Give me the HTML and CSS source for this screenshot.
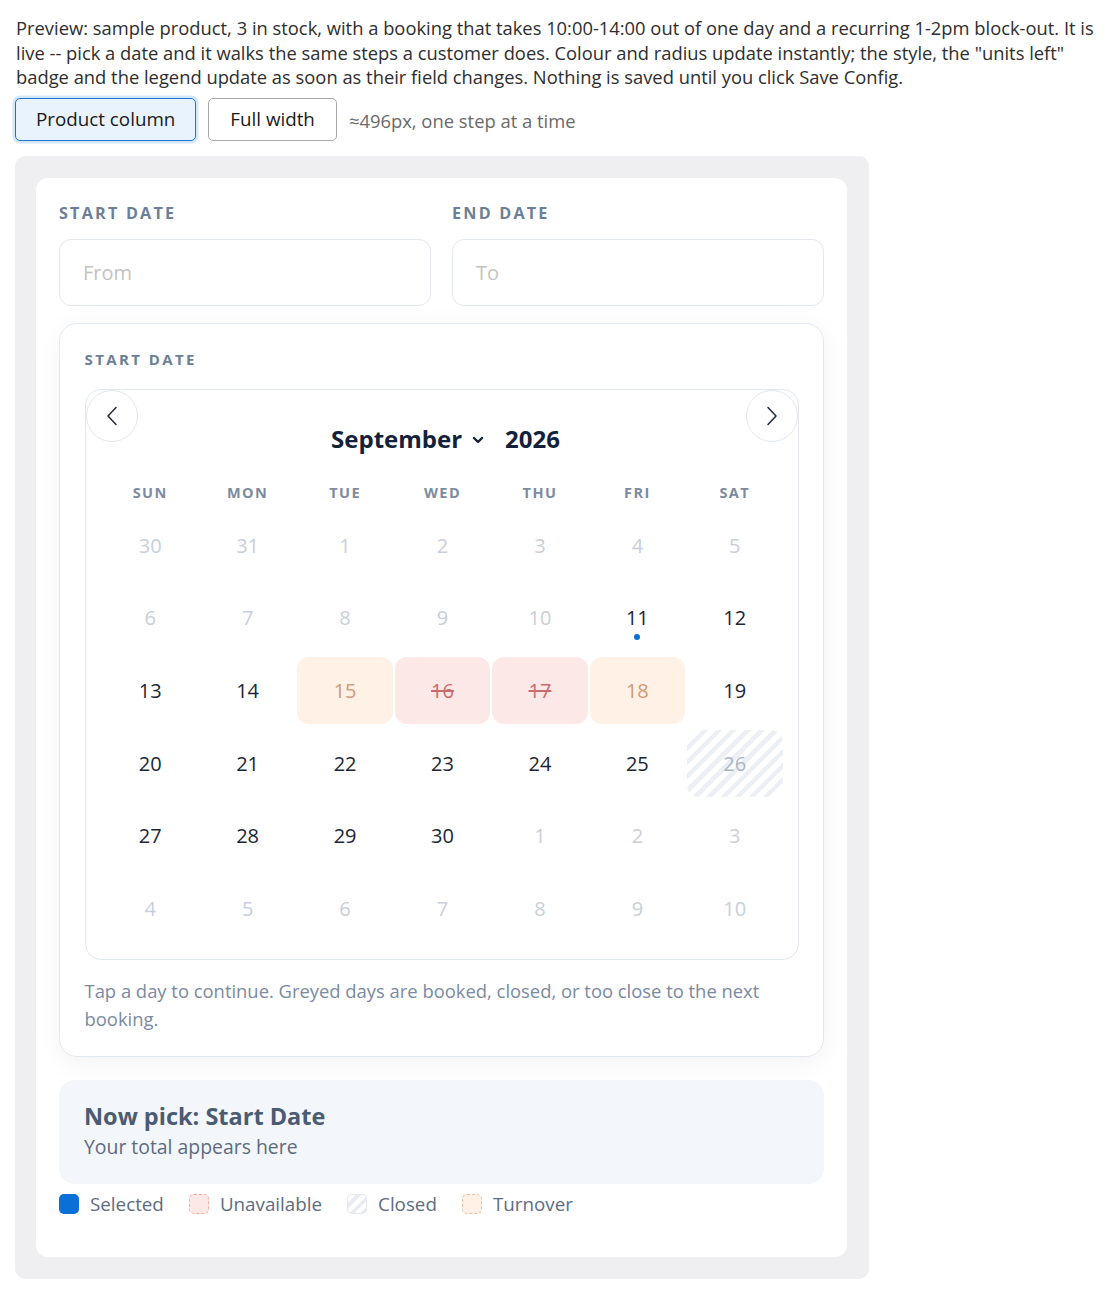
FILE: index.html
```html
<!DOCTYPE html>
<html lang="en">
<head>
<meta charset="utf-8">
<title>Booking preview</title>
<link rel="stylesheet" href="styles.css">
</head>
<body>
<p class="intro">Preview: sample product, 3 in stock, with a booking that takes 10:00-14:00 out of one day and a recurring 1-2pm block-out. It is live -- pick a date and it walks the same steps a customer does. Colour and radius update instantly; the style, the "units left" badge and the legend update as soon as their field changes. Nothing is saved until you click Save Config.</p>
<div class="controls">
  <button class="btn btn-active">Product column</button>
  <button class="btn btn-wide">Full width</button>
  <span class="controls-note">≈496px, one step at a time</span>
</div>
<div class="stage">
  <div class="widget">
    <div class="fields">
      <div class="field">
        <div class="label">START DATE</div>
        <div class="input placeholder">From</div>
      </div>
      <div class="field">
        <div class="label">END DATE</div>
        <div class="input placeholder">To</div>
      </div>
    </div>
    <div class="cal-card">
      <div class="label label-sm">START DATE</div>
      <div class="cal">
        <button class="nav nav-prev" aria-label="Previous month"><svg width="14" height="22" viewBox="0 0 14 22"><polyline points="11,2.5 3,11 11,19.5" fill="none" stroke="#1e293b" stroke-width="1.5" stroke-linecap="round" stroke-linejoin="round"/></svg></button>
        <button class="nav nav-next" aria-label="Next month"><svg width="14" height="22" viewBox="0 0 14 22"><polyline points="3,2.5 11,11 3,19.5" fill="none" stroke="#1e293b" stroke-width="1.5" stroke-linecap="round" stroke-linejoin="round"/></svg></button>
        <div class="cal-title">
          <span class="month">September</span>
          <svg class="chev" width="12" height="8" viewBox="0 0 12 8"><polyline points="2,2 6,6 10,2" fill="none" stroke="#13223a" stroke-width="2.4" stroke-linecap="round" stroke-linejoin="round"/></svg>
          <span class="year">2026</span>
        </div>
        <div class="grid weekdays">
          <div>SUN</div><div>MON</div><div>TUE</div><div>WED</div><div>THU</div><div>FRI</div><div>SAT</div>
        </div>
        <div class="grid days">
          <div class="day muted">30</div><div class="day muted">31</div><div class="day muted">1</div><div class="day muted">2</div><div class="day muted">3</div><div class="day muted">4</div><div class="day muted">5</div>
          <div class="day muted">6</div><div class="day muted">7</div><div class="day muted">8</div><div class="day muted">9</div><div class="day muted">10</div><div class="day today">11</div><div class="day">12</div>
          <div class="day">13</div><div class="day">14</div><div class="day turnover">15</div><div class="day unavail">16</div><div class="day unavail">17</div><div class="day turnover">18</div><div class="day">19</div>
          <div class="day">20</div><div class="day">21</div><div class="day">22</div><div class="day">23</div><div class="day">24</div><div class="day">25</div><div class="day closed">26</div>
          <div class="day">27</div><div class="day">28</div><div class="day">29</div><div class="day">30</div><div class="day muted">1</div><div class="day muted">2</div><div class="day muted">3</div>
          <div class="day muted">4</div><div class="day muted">5</div><div class="day muted">6</div><div class="day muted">7</div><div class="day muted">8</div><div class="day muted">9</div><div class="day muted">10</div>
        </div>
      </div>
      <p class="hint">Tap a day to continue. Greyed days are booked, closed, or too close to the next booking.</p>
    </div>
    <div class="summary">
      <div class="summary-title">Now pick: Start Date</div>
      <div class="summary-sub">Your total appears here</div>
    </div>
    <div class="legend">
      <div class="legend-item"><span class="sw sw-selected"></span>Selected</div>
      <div class="legend-item"><span class="sw sw-unavail"></span>Unavailable</div>
      <div class="legend-item"><span class="sw sw-closed"></span>Closed</div>
      <div class="legend-item"><span class="sw sw-turnover"></span>Turnover</div>
    </div>
  </div>
</div>
</body>
</html>
```
FILE: styles.css
```css
* { box-sizing: border-box; }
html, body { margin: 0; }
body {
  padding: 16px 15px 16px 15px;
  font-family: "Open Sans", "Noto Sans", sans-serif;
  color: #222;
  background: #fff;
}
.intro {
  margin: 0 0 0 1px;
  font-size: 18.35px;
  line-height: 24.5px;
  color: #2e2e2e;
}
.controls {
  display: flex;
  align-items: center;
  gap: 12px;
  margin-top: 8px;
}
.btn {
  height: 43px;
  padding: 0 20px;
  font-family: "Open Sans", sans-serif;
  font-size: 18.8px;
  font-weight: 500;
  color: #1a1a1a;
  background: #fff;
  border: 1px solid #a9a9a9;
  border-radius: 5px;
}
.btn-wide { padding: 0 21px; }
.btn-active {
  background: #e8f3fd;
  border: 1.5px solid #1f74cf;
  box-shadow: 0 0 0 2.5px #d3e8fb;
}
.controls-note {
  font-size: 18.4px;
  color: #6a6a6a;
  margin-left: 0;
  padding-top: 2px;
}
.stage {
  margin-top: 15px;
  width: 854px;
  padding: 22px 22px 22px 21px;
  background: #efeff1;
  border-radius: 10px;
}
.widget {
  background: #fff;
  border-radius: 12px;
  padding: 24px 23px 43px 23px;
}
.fields {
  display: grid;
  grid-template-columns: 1fr 1fr;
  gap: 21px;
}
.label {
  font-size: 16.2px;
  font-weight: 700;
  letter-spacing: 2.2px;
  line-height: 22px;
  color: #6b7f98;
}
.label-sm { font-size: 15px; letter-spacing: 2.4px; }
.input {
  margin-top: 15px;
  height: 67px;
  border: 1.5px solid #e3e8f0;
  border-radius: 12px;
  padding: 0 23px;
  display: flex;
  align-items: center;
  font-size: 20px;
}
.placeholder { color: #c3c3c3; }
.cal-card {
  margin-top: 17px;
  border: 1.5px solid #e2e8f0;
  border-radius: 18px;
  padding: 24px 24.5px 23px 24.5px;
  box-shadow: 0 6px 28px rgba(15, 23, 42, 0.05);
}
.cal {
  position: relative;
  margin-top: 19px;
  border: 1.5px solid #e2e8f0;
  border-radius: 16px;
  padding: 33px 15px 17px 17px;
}
.nav {
  position: absolute;
  top: 0;
  width: 52px;
  height: 52px;
  border-radius: 50%;
  border: 1.5px solid #e2e8f0;
  background: #fff;
  display: flex;
  align-items: center;
  justify-content: center;
  padding: 0;
}
.nav-prev { left: 0; }
.nav-next { right: -0.5px; }
.cal-title {
  display: flex;
  align-items: center;
  justify-content: center;
  height: 32px;
  font-size: 24px;
  font-weight: 700;
  color: #13223a;
  padding-left: 6px;
}
.chev { margin: 2px 0 0 10px; }
.year { margin-left: 21px; }
.grid {
  display: grid;
  grid-template-columns: repeat(7, 1fr);
  column-gap: 2px;
}
.weekdays {
  margin-top: 28px;
  text-align: center;
  font-size: 14.5px;
  font-weight: 700;
  letter-spacing: 1.4px;
  line-height: 20px;
  color: #7c8ba1;
}
.days {
  margin-top: 9px;
  row-gap: 5.7px;
}
.day {
  position: relative;
  height: 67px;
  display: flex;
  align-items: center;
  justify-content: center;
  font-size: 20px;
  color: #1c2635;
  border-radius: 12px;
}
.day.muted { color: #c7cfdb; }
.day.today::after {
  content: "";
  position: absolute;
  left: 50%;
  bottom: 11px;
  width: 6px;
  height: 6px;
  margin-left: -3px;
  border-radius: 50%;
  background: #0a6fd6;
}
.day.turnover { background: #fff1e6; color: #cf9a76; }
.day.unavail { background: #fde8e8; color: #c86d6d; text-decoration: line-through; }
.day.closed {
  color: #a9b5c5;
  background: repeating-linear-gradient(-45deg, #ecf0f5 0 4.5px, #fff 4.5px 10px);
}
.hint {
  margin: 17px 0 0 0;
  font-size: 18.4px;
  line-height: 28px;
  color: #7a8aa2;
}
.summary {
  margin-top: 23px;
  background: #f3f6fa;
  border-radius: 16px;
  padding: 21px 25px 23px 25px;
}
.summary-title {
  font-size: 23.5px;
  font-weight: 700;
  line-height: 30px;
  color: #4a5b72;
}
.summary-sub {
  margin-top: 2px;
  font-size: 19.4px;
  line-height: 28px;
  color: #5d6b80;
}
.legend {
  margin-top: 10px;
  display: flex;
  align-items: center;
  gap: 25px;
}
.legend-item {
  display: flex;
  align-items: center;
  gap: 11px;
  font-size: 18.8px;
  line-height: 20px;
  color: #5c6c83;
}
.sw {
  width: 20px;
  height: 20px;
  border-radius: 5px;
  display: inline-block;
}
.sw-selected { background: #0a6fd6; }
.sw-unavail { background: #fde8e8; border: 1px dashed #eeaea4; }
.sw-closed {
  border: 1px solid #e2e8f0;
  background: repeating-linear-gradient(-45deg, #e9edf3 0 4px, #fff 4px 8px);
}
.sw-turnover { background: #fff1e6; border: 1px dashed #efbf9c; }
```
